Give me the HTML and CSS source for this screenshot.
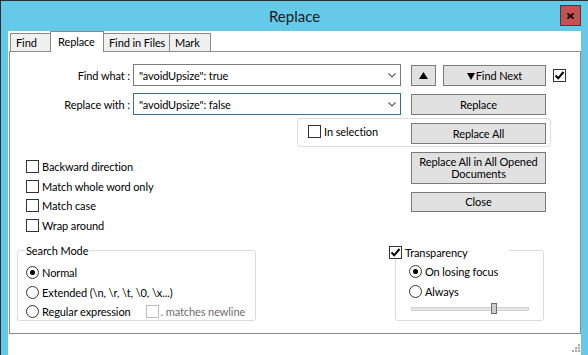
FILE: index.html
```html
<!DOCTYPE html>
<html>
<head>
<meta charset="utf-8">
<link rel="stylesheet" href="styles.css">
</head>
<body>
<div class="window">
  <div class="titlebar">
    <div class="title">Replace</div>
    <div class="close"><svg width="7" height="6" viewBox="0 0 7 6"><path d="M0.5 0.5 L6.5 5.5 M6.5 0.5 L0.5 5.5" stroke="#000" stroke-width="1.8"/></svg></div>
  </div>
  <div class="client">
    <div class="tabs">
      <div class="tab t-find">Find</div>
      <div class="tab active t-replace">Replace</div>
      <div class="tab t-files">Find in Files</div>
      <div class="tab t-mark">Mark</div>
    </div>
    <div class="panel">
      <div class="row row1">
        <div class="lbl">Find what :</div>
        <div class="combo"><span>"avoidUpsize": true</span><svg class="chev" width="8" height="5" viewBox="0 0 8 5"><path d="M0.5 0.5 L4 4 L7.5 0.5" fill="none" stroke="#606060" stroke-width="1.2"/></svg></div>
        <button class="btn up"><svg width="9" height="7" viewBox="0 0 9 7"><polygon points="4.5,0 9,7 0,7" fill="#000"/></svg></button>
        <button class="btn next"><svg width="8" height="7" viewBox="0 0 8 7"><polygon points="0,0 8,0 4,7" fill="#000"/></svg><span>Find Next</span></button>
        <span class="cb checked"><svg width="11" height="11" viewBox="0 0 11 11"><path d="M1.5 5.5 L4.2 8.3 L9.5 2" fill="none" stroke="#000" stroke-width="2"/></svg></span>
      </div>
      <div class="row row2">
        <div class="lbl">Replace with :</div>
        <div class="combo focus"><span>"avoidUpsize": false</span><svg class="chev" width="8" height="5" viewBox="0 0 8 5"><path d="M0.5 0.5 L4 4 L7.5 0.5" fill="none" stroke="#606060" stroke-width="1.2"/></svg></div>
        <button class="btn wide">Replace</button>
      </div>
      <div class="selgroup">
        <div class="selcheck"><span class="cb"></span><span class="cbtext">In selection</span></div>
        <button class="btn wide">Replace All</button>
      </div>
      <div class="mid">
        <div class="opts">
          <div class="opt"><span class="cb"></span><span class="cbtext">Backward direction</span></div>
          <div class="opt"><span class="cb"></span><span class="cbtext">Match whole word only</span></div>
          <div class="opt"><span class="cb"></span><span class="cbtext">Match case</span></div>
          <div class="opt"><span class="cb"></span><span class="cbtext">Wrap around</span></div>
        </div>
        <div class="rbtns">
          <button class="btn wide tall">Replace All in All Opened<br>Documents</button>
          <button class="btn wide closebtn">Close</button>
        </div>
      </div>
      <div class="bottom">
        <div class="group search">
          <div class="legend">Search Mode</div>
          <div class="radio r1"><span class="rb on"><span class="dot"></span></span><span class="cbtext">Normal</span></div>
          <div class="radio"><span class="rb"></span><span class="cbtext">Extended (\n, \r, \t, \0, \x...)</span></div>
          <div class="radio r3"><span class="rb"></span><span class="cbtext">Regular expression</span><span class="cb disabled"></span><span class="cbtext dis">. matches newline</span></div>
        </div>
        <div class="group trans">
          <div class="legend tlegend"><span class="cb checked"><svg width="11" height="11" viewBox="0 0 11 11"><path d="M1.5 5.5 L4.2 8.3 L9.5 2" fill="none" stroke="#000" stroke-width="2"/></svg></span><span class="cbtext">Transparency</span></div>
          <div class="radio tr1"><span class="rb on"><span class="dot"></span></span><span class="cbtext">On losing focus</span></div>
          <div class="radio tr2"><span class="rb"></span><span class="cbtext">Always</span></div>
          <div class="slider"><span class="track left"></span><span class="thumb"></span><span class="track right"></span></div>
        </div>
      </div>
    </div>
    <div class="status">
      <svg width="10" height="10" viewBox="0 0 10 10"><g fill="#a8a8a8"><rect x="8" y="0" width="2" height="2"/><rect x="5" y="3" width="2" height="2"/><rect x="8" y="3" width="2" height="2"/><rect x="2" y="6" width="2" height="2"/><rect x="5" y="6" width="2" height="2"/><rect x="8" y="6" width="2" height="2"/></g></svg>
    </div>
  </div>
</div>
</body>
</html>
```

FILE: styles.css
```css
html, body {
  margin: 0;
  padding: 0;
}
body {
  width: 588px;
  height: 355px;
  overflow: hidden;
  font-family: Lato, "Liberation Sans", sans-serif;
  font-size: 11px;
  letter-spacing: -0.1px;
  color: #000;
}
.window {
  width: 588px;
  height: 355px;
  box-sizing: border-box;
  border-top: 1px solid #2e2e2e;
  border-left: 1px solid #2e2e2e;
  background: #65c9e8;
  padding: 0 7px;
  display: flex;
  flex-direction: column;
}
.titlebar {
  height: 30px;
  margin: 0 -7px;
  display: grid;
  grid-template-columns: 1fr auto 1fr;
  align-items: start;
  flex: none;
}
.title {
  grid-column: 2;
  font-size: 15px;
  letter-spacing: 0;
  line-height: 30px;
  color: #1b1b1b;
}
.close {
  grid-column: 3;
  justify-self: end;
  margin: 4px 7px 0 0;
  width: 21px;
  height: 21px;
  box-sizing: border-box;
  background: #c75050;
  border: 1px solid #3e3e3e;
  display: flex;
  align-items: center;
  justify-content: center;
}
.client {
  flex: 1;
  background: #fff;
  display: flex;
  flex-direction: column;
}
.tabs {
  display: flex;
  align-items: flex-end;
  height: 20px;
  padding-left: 2px;
  flex: none;
}
.tab {
  box-sizing: border-box;
  height: 18px;
  border: 1px solid #898989;
  border-bottom: none;
  background: #f0f0f0;
  padding-left: 5px;
  line-height: 18px;
  white-space: nowrap;
}
.tab + .tab {
  margin-left: -1px;
}
.t-find { width: 41px; }
.t-replace { width: 54px; }
.t-files { width: 67px; }
.t-mark { width: 42px; }
.tab.active {
  height: 21px;
  margin-bottom: -1px;
  background: #fff;
  position: relative;
  z-index: 1;
  padding-left: 7px;
  line-height: 19px;
}
.panel {
  box-sizing: border-box;
  margin-left: 1px;
  height: 283px;
  border: 1px solid #8c8c8c;
  flex: none;
}
.row {
  display: flex;
  align-items: center;
  height: 22px;
}
.row1 { margin-top: 12px; }
.row2 { margin-top: 7px; }
.lbl {
  width: 120px;
  text-align: right;
  white-space: nowrap;
}
.combo {
  margin-left: 3px;
  width: 268px;
  height: 22px;
  box-sizing: border-box;
  border: 1px solid #7a7a7a;
  display: flex;
  align-items: center;
  justify-content: space-between;
  padding: 0 4px 0 5px;
  white-space: nowrap;
}
.combo.focus {
  border-color: #3a6e9c;
}
.chev { flex: none; }
.btn {
  box-sizing: border-box;
  height: 21px;
  border: 1px solid #7a7a7a;
  background: #e1e1e1;
  font: inherit;
  letter-spacing: inherit;
  color: #000;
  padding: 0;
  margin: 0;
  display: flex;
  align-items: center;
  justify-content: center;
  line-height: 12px;
}
.row .btn { margin-top: 1px; }
.up { margin-left: 10px; width: 25px; }
.next { margin-left: 7px; width: 103px; gap: 1px; }
.next svg { margin-top: 1px; }
.row2 .wide { margin-left: 10px; }
.wide { width: 135px; }
.cb {
  display: inline-flex;
  align-items: center;
  justify-content: center;
  width: 13px;
  height: 13px;
  box-sizing: border-box;
  border: 1px solid #333;
  background: #fff;
  flex: none;
}
.row1 .cb { margin-left: 7px; }
.cb.disabled { border-color: #bcbcbc; }
.cbtext {
  margin-left: 3px;
  white-space: nowrap;
}
.cbtext.dis { color: #6d6d6d; margin-left: 2px; }
.selgroup {
  box-sizing: border-box;
  margin: 3px 0 0 287px;
  width: 254px;
  height: 29px;
  border: 1px solid #dcdcdc;
  border-radius: 3px;
  display: flex;
  align-items: flex-start;
  padding-top: 4px;
}
.selcheck {
  width: 113px;
  box-sizing: border-box;
  padding-left: 10px;
  display: flex;
  align-items: center;
  height: 21px;
  margin-top: -2px;
}
.selgroup .btn { height: 21px; }
.mid {
  display: grid;
  grid-template-columns: 401px 135px;
  height: 103px;
}
.opts {
  padding-left: 16px;
  padding-top: 9.75px;
}
.opt {
  display: flex;
  align-items: center;
  height: 19.5px;
}
.rbtns {
  padding-top: 5px;
}
.tall {
  height: 32px;
  margin-bottom: 8px;
  line-height: 12px;
}
.closebtn { height: 20px; }
.bottom {
  display: flex;
  align-items: flex-start;
}
.group {
  box-sizing: border-box;
  height: 71px;
  border: 1px solid #dcdcdc;
  border-radius: 3px;
}
.search {
  margin-left: 7px;
  width: 239px;
}
.trans {
  margin-left: 139px;
  width: 149px;
}
.legend {
  display: flex;
  align-items: center;
  width: max-content;
  height: 14px;
  margin-top: -8px;
  margin-left: 7px;
  padding: 0 2px 0 1px;
  background: #fff;
  white-space: nowrap;
}
.tlegend {
  margin-top: -6px;
  margin-left: -7px;
  width: 120px;
  padding: 0;
  box-sizing: border-box;
}
.radio {
  display: flex;
  align-items: center;
  height: 20px;
  padding-left: 8px;
}
.radio.r1 { margin-top: 5px; }
.radio.r3 { height: 19px; }
.r3 .cb { margin-left: 15px; }
.trans .radio { padding-left: 13px; }
.trans .tr1 { margin-top: 2px; }
.rb {
  display: inline-flex;
  align-items: center;
  justify-content: center;
  width: 13px;
  height: 13px;
  box-sizing: border-box;
  border: 1px solid #333;
  border-radius: 50%;
  background: #fff;
  flex: none;
}
.dot {
  width: 5px;
  height: 5px;
  border-radius: 50%;
  background: #000;
}
.slider {
  display: flex;
  align-items: center;
  height: 11px;
  margin: 2px 0 0 15px;
}
.track {
  box-sizing: border-box;
  height: 4px;
  background: #e7e7e7;
  border: 1px solid #d0d0d0;
}
.track.left { width: 80px; border-right: none; }
.track.right { width: 32px; border-left: none; }
.thumb {
  box-sizing: border-box;
  width: 6px;
  height: 11px;
  background: #cdcdcd;
  border: 1px solid #6f6f6f;
}
.status {
  flex: 1;
  display: flex;
  justify-content: flex-end;
  align-items: flex-end;
  padding: 0 1px 1px 0;
}
```
